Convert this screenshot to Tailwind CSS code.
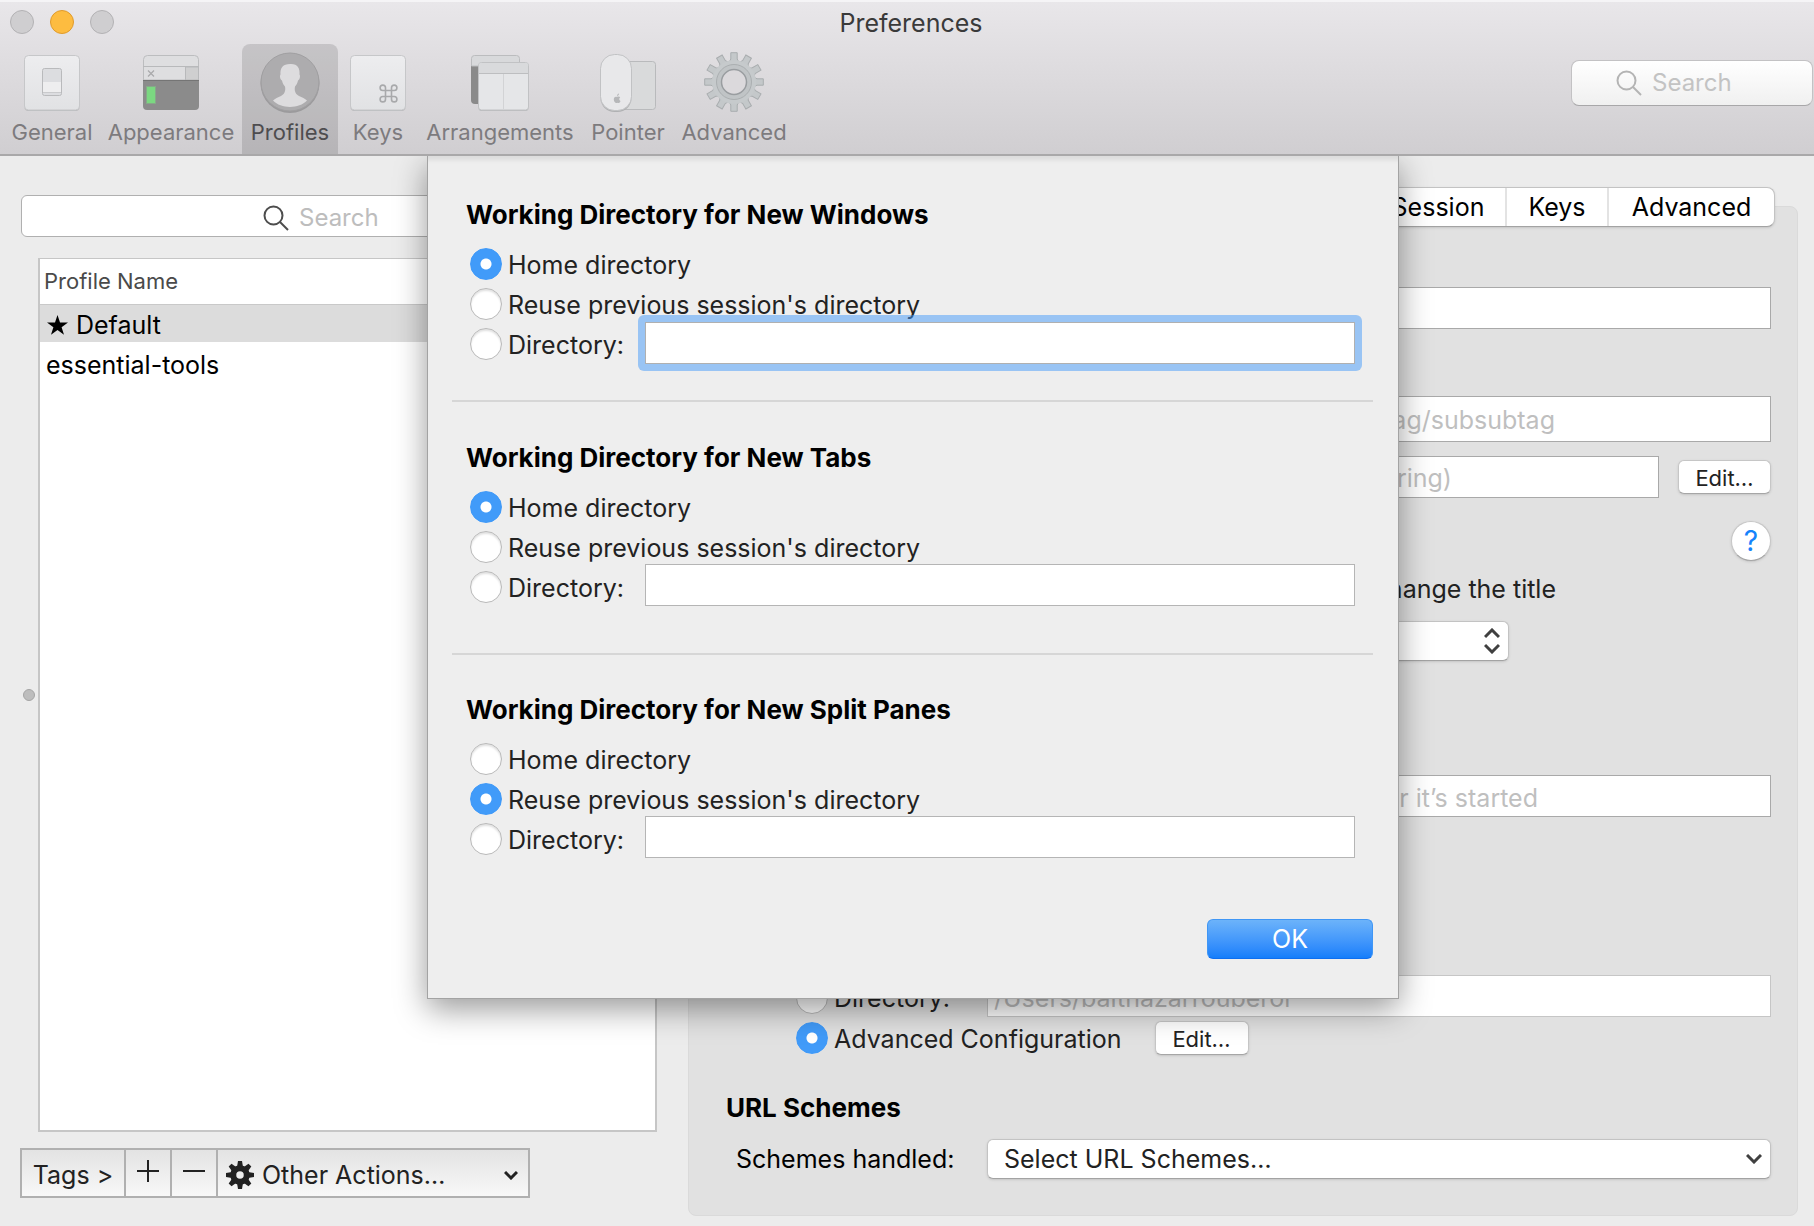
<!DOCTYPE html>
<html lang="en">
<head>
<meta charset="utf-8">
<title>Preferences</title>
<script src="https://cdn.jsdelivr.net/npm/@tailwindcss/browser@4"></script>
</head>
<body class="relative flex min-h-screen flex-col overflow-x-hidden bg-[#ececec] font-['Inter',sans-serif] text-[25px] leading-8 text-[#222]">

<!-- Title bar and toolbar -->
<header class="relative z-20 h-[156px] border-b-2 border-[#a9a8a9] bg-linear-to-b from-[#e9e7ea] to-[#d0ced1] shadow-[inset_0_2px_0_#f5f4f6]">
  <div class="relative flex h-11 items-center justify-center">
    <div class="absolute left-[10px] top-[10px] flex gap-4">
      <button aria-label="Close" class="size-6 rounded-full border border-[#b3b2b4] bg-[#cfced0]"></button>
      <button aria-label="Minimize" class="size-6 rounded-full border border-[#e09b2c] bg-[#fdbc40]"></button>
      <button aria-label="Zoom" class="size-6 rounded-full border border-[#b3b2b4] bg-[#cfced0]"></button>
    </div>
    <h1 class="pl-2 pt-[2px] text-[25px] text-[#3a3a3a]">Preferences</h1>
  </div>
  <div class="flex items-start justify-between pl-1">
    <nav class="flex text-[22px] leading-7 text-[#7d7b7e]">
      <button class="flex h-[110px] w-24 flex-col items-center gap-[2px] pt-2">
        <svg width="60" height="64" viewBox="0 0 60 64">
          <defs>
            <linearGradient id="plate" x1="0" y1="0" x2="0" y2="1"><stop offset="0" stop-color="#ededef"/><stop offset="1" stop-color="#e1e2e4"/></linearGradient>
          </defs>
          <rect x="2.500" y="4" width="55" height="55" rx="4" fill="#b9babc"/>
          <rect x="2.500" y="3.500" width="55" height="54.500" rx="4" fill="url(#plate)" stroke="#c6c7c9"/>
          <rect x="20.500" y="16.500" width="19" height="27" rx="2" fill="#dcdde0" stroke="#b9babc"/>
          <rect x="21" y="30" width="18" height="10" fill="#eeeeef"/>
          <path d="M21 40.500h18" stroke="#c9cacc"/>
        </svg>
        General
      </button>
      <button class="flex h-[110px] w-[142px] flex-col items-center gap-[2px] pt-2">
        <svg width="60" height="64" viewBox="0 0 60 64">
          <path d="M2 28h56v26a4 4 0 0 1-4 4H6a4 4 0 0 1-4-4z" fill="#8b8b8b"/>
          <path d="M2.500 28V7.500a4 4 0 0 1 4-4h47a4 4 0 0 1 4 4V28z" fill="#dedee0" stroke="#bcbdbf"/>
          <path d="M2 14.500h56" stroke="#b8b9bb"/>
          <path d="M44.500 15h13v13h-13z" fill="#cfcfd0" stroke="#b8b9bb"/>
          <path d="M7 18.500l6 6m0-6l-6 6" stroke="#a9a9ab" stroke-width="1.200"/>
          <path d="M2 28.500h56" stroke="#757575"/>
          <rect x="5" y="34" width="10" height="18" fill="#7ee085" opacity=".35"/>
          <rect x="6" y="35" width="8" height="16" fill="#7bd881"/>
        </svg>
        Appearance
      </button>
      <button aria-current="page" class="flex h-[110px] w-24 flex-col items-center gap-[2px] rounded-t-lg bg-black/12 pt-2 text-[#4e4d4f]">
        <svg width="60" height="64" viewBox="0 0 60 64">
          <circle cx="30" cy="31.500" r="29.500" fill="#9b9a9c"/>
          <circle cx="30" cy="30" r="29" fill="#adacae" stroke="#a09fa1"/>
          <path d="M30 12c-7 0-10 4-9.500 10.500-1 1-.500 5 1.500 6 .500 3 2 5 3 6 1 5-1 8-4 9.500-3 1.500-6 2.500-8 4.500 8 8.500 26 8.500 34 0-2-2-5-3-8-4.500-3-1.500-5-4.500-4-9.500 1-1 2.500-3 3-6 2-1 2.500-5 1.500-6C40 16 37.500 11.500 30 12z" fill="#dddcde"/>
        </svg>
        Profiles
      </button>
      <button class="flex h-[110px] w-20 flex-col items-center gap-[2px] pt-2">
        <svg width="60" height="64" viewBox="0 0 60 64">
          <rect x="2.500" y="4" width="55" height="55" rx="4" fill="#b9babc"/>
          <rect x="2.500" y="3.500" width="55" height="54.500" rx="4" fill="url(#plate)" stroke="#c6c7c9"/>
          <path d="M37.500 38.500h6v6h-6zM37.500 38.500v-2.700a2.700 2.700 0 1 0-2.700 2.700zM43.500 38.500h2.700a2.700 2.700 0 1 0-2.700-2.700zM43.500 44.500v2.700a2.700 2.700 0 1 0 2.700-2.700zM37.500 44.500h-2.700a2.700 2.700 0 1 0 2.700 2.700z" fill="none" stroke="#a8a9ab" stroke-width="1.600"/>
        </svg>
        Keys
      </button>
      <button class="flex h-[110px] w-[164px] flex-col items-center gap-[2px] pt-2">
        <svg width="60" height="64" viewBox="0 0 60 64">
          <path d="M1 13h12v39H5a4 4 0 0 1-4-4z" fill="#8a8a8a"/>
          <path d="M1.500 14V6.500a3 3 0 0 1 3-3h42a3 3 0 0 1 3 3V14z" fill="#d8d9db" stroke="#bbbcbe"/>
          <rect x="8.500" y="11" width="50" height="48" rx="3" fill="#b9babc"/>
          <rect x="8.500" y="10.500" width="50" height="47.500" rx="3" fill="#e5e6e8" stroke="#c1c2c4"/>
          <path d="M9 21.500V13a2 2 0 0 1 2-2h45a2 2 0 0 1 2 2v8.500z" fill="#d9dadc"/>
          <path d="M9 21.500h49" stroke="#bdbec0"/><path d="M33.500 22v35" stroke="#d2d3d5"/>
        </svg>
        Arrangements
      </button>
      <button class="flex h-[110px] w-[92px] flex-col items-center gap-[2px] pt-2">
        <svg width="60" height="64" viewBox="0 0 60 64">
          <rect x="20.500" y="9.500" width="37" height="48" rx="3" fill="#d9dadb" stroke="#b9babc"/>
          <rect x="2.500" y="4" width="31" height="56" rx="14" fill="#b0b1b3"/>
          <rect x="2.500" y="2.500" width="31" height="56" rx="14" fill="#e8e8ea" stroke="#c1c2c4"/>
          <path d="M19 44c.200-1.500 1-2.300 2-2.500 0 1.500-.800 2.400-2 2.500zM19 45c1-.700 2.500-.600 3.200.300-1.400 1-1.200 2.900.300 3.600-.700 1.800-1.600 2.500-3.200 1.800-1.600.700-3.300-.300-3.500-2.900-.100-2.600 1.500-3.600 3.200-2.800z" fill="#b6b7b9"/>
        </svg>
        Pointer
      </button>
      <button class="flex h-[110px] w-[120px] flex-col items-center gap-[2px] pt-2">
        <svg width="60" height="64" viewBox="0 0 60 64">
          <g id="teeth" fill="#c4c8ca" stroke="#a9adaf"></g>
          <circle cx="30" cy="30" r="22" fill="#c6cacc"/>
          <circle cx="30" cy="30" r="17.500" fill="#c0c4c6" stroke="#abafb1"/>
          <circle cx="30" cy="30" r="12.500" fill="#dbd9dc" stroke="#999da0" stroke-width="1.500"/>
        </svg>
        Advanced
      </button>
    </nav>
    <label class="mr-px mt-4 flex h-[46px] w-[242px] items-center gap-[10px] rounded-lg border border-[#c3c2c4] border-b-[#a8a7a9] bg-linear-to-b from-white to-[#f0f0f0] pl-11">
      <svg class="shrink-0" width="26" height="26" viewBox="0 0 26 26" fill="none" stroke="#b4b4b4" stroke-width="2"><circle cx="10.500" cy="10.500" r="9"/><path d="M17 17l8 8"/></svg>
      <input type="search" aria-label="Search preferences" placeholder="Search" class="w-full min-w-0 bg-transparent text-[24px] outline-none placeholder:text-[#c3c3c3]">
    </label>
  </div>
</header>

<main class="flex flex-1">
  <!-- Profile list -->
  <section class="flex w-[657px] shrink-0 flex-col pb-7 pl-5 pt-[39px]">
    <label class="ml-px flex h-[42px] shrink-0 items-center gap-[10px] rounded-md border border-[#b0b0b0] bg-white pl-[241px] pt-[3px]">
      <svg class="shrink-0" width="26" height="26" viewBox="0 0 26 26" fill="none" stroke="#4d4d4d" stroke-width="2"><circle cx="10.500" cy="10.500" r="9"/><path d="M17 17l8 8"/></svg>
      <input type="search" aria-label="Search profiles" placeholder="Search" class="w-full min-w-0 bg-transparent text-[24px] outline-none placeholder:text-[#bdbdbd]">
    </label>
    <div class="mt-[21px] flex flex-1 items-center">
      <span class="ml-[3px] mr-[3px] size-3 shrink-0 rounded-full border border-[#a5a5a5] bg-[#bdbdbd]"></span>
      <div class="h-full flex-1 border-2 border-t border-[#c6c6c6] bg-white">
        <table class="w-full table-fixed text-left">
          <thead>
            <tr class="h-[45px] border-b border-[#c9c9c9]"><th class="pl-1 text-[22px] font-normal text-[#4a4a4a]">Profile Name</th></tr>
          </thead>
          <tbody class="text-black">
            <tr class="h-[38px] bg-[#dcdcdc]"><td class="pl-[7px] pt-[3px]"><span class="flex items-center gap-2"><svg width="21" height="20" viewBox="0 0 21 20"><path d="M10.500 0l2.500 7.500h8l-6.400 4.700 2.400 7.600-6.500-4.700L4 19.800l2.400-7.600L0 7.500h8z"/></svg>Default</span></td></tr>
            <tr class="h-11"><td class="pl-[6px] pt-[2px]">essential-tools</td></tr>
          </tbody>
        </table>
      </div>
    </div>
    <div class="mt-4 flex h-[50px] w-[510px] shrink-0 divide-x-2 divide-[#b0b0b0] border-2 border-[#b0b0b0] bg-linear-to-b from-[#e3e3e3] to-[#f8f8f8]">
      <button class="w-[104px] pt-1">Tags &gt;</button>
      <button aria-label="Add profile" class="flex w-[46px] items-center justify-center pb-1"><svg width="22" height="22" viewBox="0 0 22 22" stroke="#222" stroke-width="2"><path d="M0 11h22M11 0v22"/></svg></button>
      <button aria-label="Remove profile" class="flex w-[46px] items-center justify-center pb-1"><svg width="22" height="22" viewBox="0 0 22 22" stroke="#222" stroke-width="2"><path d="M0 11h22"/></svg></button>
      <div class="flex flex-1 items-center gap-2 pl-2 pr-[10px] pt-1">
        <svg width="28" height="28" viewBox="0 0 28 28"><g id="cog" fill="#222"></g><circle cx="14" cy="14" r="6.750" fill="none" stroke="#222" stroke-width="6"/></svg>
        <select aria-label="Other actions" class="flex-1 appearance-none bg-transparent outline-none"><option>Other Actions…</option></select>
        <svg width="14" height="9" viewBox="0 0 14 9" fill="none" stroke="#222" stroke-width="3"><path d="M1 1l6 6 6-6"/></svg>
      </div>
    </div>
  </section>

  <!-- Profile settings -->
  <section class="flex min-w-0 flex-1 flex-col pb-[10px] pl-[31px] pr-4 pt-[31px]">
    <div class="z-10 mr-[23px] flex h-10 divide-x-2 divide-[#e3e3e3] self-end rounded-lg border border-[#c3c3c3] border-b-[#a3a3a3] bg-white text-black shadow-sm">
      <button class="w-[136px]">Session</button>
      <button class="w-[102px]">Keys</button>
      <button class="w-[165px]">Advanced</button>
    </div>
    <div class="-mt-[21px] flex flex-1 flex-col rounded-lg border border-[#dadada] bg-[#e1e1e1] pl-[37px] pr-[26px] pt-20">
      <div class="flex flex-col pl-[261px]">
        <input aria-label="Name" class="h-[42px] border border-[#a9a9a9] bg-white px-2">
        <input aria-label="Tags" placeholder="tag/subsubtag" class="mt-[67px] h-[46px] border border-[#a9a9a9] bg-white pr-[215px] pt-[2px] text-right placeholder:text-[#bfbfbf]">
        <div class="mt-[14px] flex items-center gap-[19px]">
          <input aria-label="Badge" placeholder="(string)" class="h-[42px] min-w-0 flex-1 border border-[#a9a9a9] bg-white pr-[206px] pt-[2px] text-right placeholder:text-[#bfbfbf]">
          <button class="h-[34px] w-[93px] rounded-md border border-[#c6c6c6] border-b-[#a6a6a6] bg-white pt-[2px] text-[22px] leading-7 shadow-sm">Edit…</button>
        </div>
        <button aria-label="Help" class="mt-[23px] size-10 self-end rounded-full border border-[#c6c6c6] border-b-[#a6a6a6] bg-white text-[28px] leading-8 text-[#1583fb] shadow-sm">?</button>
        <p class="mt-3 self-end pr-[215px]">change the title</p>
        <div class="mr-[262px] mt-4 flex h-10 items-center rounded-md border border-[#c3c3c3] border-b-[#a3a3a3] bg-white pr-[8px] shadow-sm">
          <select aria-label="Title" class="flex-1 appearance-none pl-4 outline-none"><option></option></select>
          <svg width="16" height="26" viewBox="0 0 16 26" fill="none" stroke="#404040" stroke-width="3"><path d="M1 9l7-7 7 7M1 17l7 7 7-7"/></svg>
        </div>
        <input aria-label="Send text at start" placeholder="after it’s started" class="mt-[114px] h-[42px] border border-[#a9a9a9] bg-white pr-[232px] pt-[4px] text-right placeholder:text-[#bfbfbf]">
      </div>
      <div class="mt-[158px] flex items-center pl-[70px]">
        <label class="flex w-[191px] items-center gap-[6px] pt-1"><input type="radio" name="wd" class="size-8 shrink-0 appearance-none rounded-full border border-[#b9b9b9] bg-white">Directory:</label>
        <input aria-label="Directory path" placeholder="/Users/balthazarrouberol" class="h-[42px] min-w-0 flex-1 border border-[#c6c6c6] bg-white pl-[6px] pt-1 placeholder:text-[#bfbfbf]">
      </div>
      <div class="flex h-[42px] items-center gap-[33px] pl-[70px]">
        <label class="flex items-center gap-[6px]"><input type="radio" name="wd" checked class="size-8 shrink-0 appearance-none rounded-full border border-[#b9b9b9] bg-white checked:border-[#3f99f8] checked:bg-[radial-gradient(circle,#fff_5px,#419bf9_6px)]"><span class="pt-[2px]">Advanced Configuration</span></label>
        <button class="h-[34px] w-[94px] rounded-md border border-[#c6c6c6] border-b-[#a6a6a6] bg-white pt-[2px] text-[22px] leading-7 shadow-sm">Edit…</button>
      </div>
      <h2 class="mt-[33px] text-[26px] font-bold text-black">URL Schemes</h2>
      <div class="mt-[15px] flex items-center pl-[10px]">
        <label for="schemes" class="w-[251px] text-black">Schemes handled:</label>
        <div class="flex h-10 min-w-0 flex-1 items-center rounded-md border border-[#c3c3c3] border-b-[#a3a3a3] bg-white pl-4 pr-[8px] shadow-sm">
          <select id="schemes" class="min-w-0 flex-1 appearance-none outline-none"><option>Select URL Schemes…</option></select>
          <svg width="16" height="10" viewBox="0 0 16 10" fill="none" stroke="#404040" stroke-width="3"><path d="M1 1l7 7 7-7"/></svg>
        </div>
      </div>
    </div>
  </section>
</main>

<!-- Working directory sheet -->
<form class="absolute left-[427px] right-[415px] top-[156px] z-10 flex flex-col border border-t-0 border-[#a3a3a3] bg-[#eeeeee] pl-6 pr-[25px] pb-[39px] pt-[43px] shadow-[0_10px_30px_rgba(0,0,0,0.4),inset_0_8px_4px_-4px_rgba(0,0,0,0.08)]">
  <fieldset class="pl-[14px] pr-[18px]">
    <legend class="text-[26px] font-bold text-black">Working Directory for New Windows</legend>
    <div class="mt-[13px] pl-1">
      <label class="flex h-10 items-center gap-[6px]"><input type="radio" name="win" checked class="size-8 shrink-0 appearance-none rounded-full border border-[#b9b9b9] bg-white checked:border-[#3f99f8] checked:bg-[radial-gradient(circle,#fff_5px,#419bf9_6px)]"><span class="pt-[2px]">Home directory</span></label>
      <label class="flex h-10 items-center gap-[6px]"><input type="radio" name="win" class="size-8 shrink-0 appearance-none rounded-full border border-[#b9b9b9] bg-white shadow-[inset_0_2px_2px_rgba(0,0,0,0.12)]"><span class="pt-[2px]">Reuse previous session's directory</span></label>
      <div class="flex h-10 items-center">
        <label class="flex w-[175px] shrink-0 items-center gap-[6px]"><input type="radio" name="win" class="size-8 shrink-0 appearance-none rounded-full border border-[#b9b9b9] bg-white shadow-[inset_0_2px_2px_rgba(0,0,0,0.12)]"><span class="pt-[2px]">Directory:</span></label>
        <div class="flex-1 pb-[2px]"><div class="relative flex before:absolute before:-inset-[7px] before:rounded-md before:bg-[#439afa]/50"><input aria-label="Directory for new windows" class="relative h-[42px] w-full border border-[#b0b0b0] bg-white px-2 outline-none"></div></div>
      </div>
    </div>
  </fieldset>
  <hr class="mt-9 border-t-2 border-[#d6d6d6]">
  <fieldset class="mt-10 pl-[14px] pr-[18px]">
    <legend class="text-[26px] font-bold text-black">Working Directory for New Tabs</legend>
    <div class="mt-[13px] pl-1">
      <label class="flex h-10 items-center gap-[6px]"><input type="radio" name="tab" checked class="size-8 shrink-0 appearance-none rounded-full border border-[#b9b9b9] bg-white checked:border-[#3f99f8] checked:bg-[radial-gradient(circle,#fff_5px,#419bf9_6px)]"><span class="pt-[2px]">Home directory</span></label>
      <label class="flex h-10 items-center gap-[6px]"><input type="radio" name="tab" class="size-8 shrink-0 appearance-none rounded-full border border-[#b9b9b9] bg-white shadow-[inset_0_2px_2px_rgba(0,0,0,0.12)]"><span class="pt-[2px]">Reuse previous session's directory</span></label>
      <div class="flex h-10 items-center">
        <label class="flex w-[175px] shrink-0 items-center gap-[6px]"><input type="radio" name="tab" class="size-8 shrink-0 appearance-none rounded-full border border-[#b9b9b9] bg-white shadow-[inset_0_2px_2px_rgba(0,0,0,0.12)]"><span class="pt-[2px]">Directory:</span></label>
        <div class="flex flex-1 pb-[4px]"><input aria-label="Directory for new tabs" class="h-[42px] w-full border border-[#b5b5b5] bg-white px-2"></div>
      </div>
    </div>
  </fieldset>
  <hr class="mt-[46px] border-t-2 border-[#d6d6d6]">
  <fieldset class="mt-[39px] pl-[14px] pr-[18px]">
    <legend class="text-[26px] font-bold text-black">Working Directory for New Split Panes</legend>
    <div class="mt-[13px] pl-1">
      <label class="flex h-10 items-center gap-[6px]"><input type="radio" name="pane" class="size-8 shrink-0 appearance-none rounded-full border border-[#b9b9b9] bg-white shadow-[inset_0_2px_2px_rgba(0,0,0,0.12)]"><span class="pt-[2px]">Home directory</span></label>
      <label class="flex h-10 items-center gap-[6px]"><input type="radio" name="pane" checked class="size-8 shrink-0 appearance-none rounded-full border border-[#b9b9b9] bg-white checked:border-[#3f99f8] checked:bg-[radial-gradient(circle,#fff_5px,#419bf9_6px)]"><span class="pt-[2px]">Reuse previous session's directory</span></label>
      <div class="flex h-10 items-center">
        <label class="flex w-[175px] shrink-0 items-center gap-[6px]"><input type="radio" name="pane" class="size-8 shrink-0 appearance-none rounded-full border border-[#b9b9b9] bg-white shadow-[inset_0_2px_2px_rgba(0,0,0,0.12)]"><span class="pt-[2px]">Directory:</span></label>
        <div class="flex flex-1 pb-[4px]"><input aria-label="Directory for new split panes" class="h-[42px] w-full border border-[#b5b5b5] bg-white px-2"></div>
      </div>
    </div>
  </fieldset>
  <button type="button" class="mt-[60px] h-10 w-[166px] self-end rounded-md border border-[#3f96f5] border-b-[#0f6ff0] bg-linear-to-b from-[#6cb3fa] to-[#147efb] text-white">OK</button>
</form>

<script>
// Gear teeth are one tooth repeated around the hub.
function teeth(id, n, cx, cy, d) {
  let s = '';
  for (let i = 0; i < n; i++) s += `<path d="${d}" transform="rotate(${i * 360 / n} ${cx} ${cy})"/>`;
  document.getElementById(id).innerHTML = s;
}
teeth('teeth', 12, 30, 30, 'M25 10.500L26.800 7V.700h6.400V7L35 10.500z');
teeth('cog', 8, 14, 14, 'M11 6L12 0h4l1 6z');
</script>
</body>
</html>
